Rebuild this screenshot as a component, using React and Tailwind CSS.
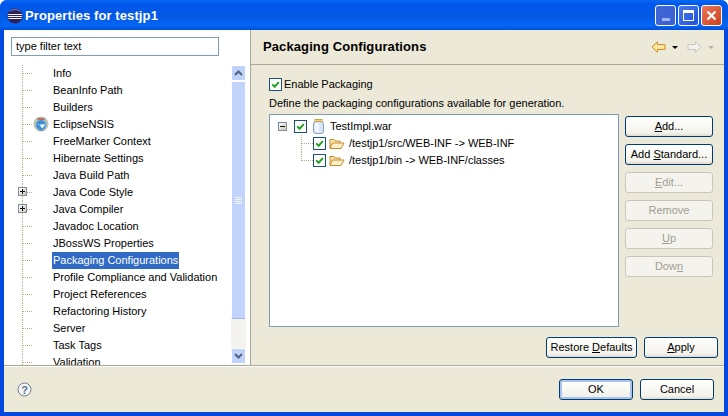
import React from 'react';

const font = "font-['Liberation_Sans','DejaVu_Sans',sans-serif]";

const prefs = [
  'Info', 'BeanInfo Path', 'Builders', 'EclipseNSIS', 'FreeMarker Context', 'Hibernate Settings',
  'Java Build Path', 'Java Code Style', 'Java Compiler', 'Javadoc Location', 'JBossWS Properties',
  'Packaging Configurations', 'Profile Compliance and Validation', 'Project References',
  'Refactoring History', 'Server', 'Task Tags', 'Validation',
];

const expandable = ['Java Code Style', 'Java Compiler'];

function PlusBox({ minus }) {
  return (
    <svg width="9" height="9" viewBox="0 0 9 9" className="block shrink-0">
      <defs>
        <linearGradient id="box" x1="0" y1="0" x2="1" y2="1">
          <stop offset="0" stopColor="#ffffff" />
          <stop offset="1" stopColor="#c9c5b0" />
        </linearGradient>
      </defs>
      <rect x="0.5" y="0.5" width="8" height="8" fill="url(#box)" stroke="#7b8ea6" />
      <path d="M2 4.5h5" stroke="#111" />
      {!minus && <path d="M4.5 2v5" stroke="#111" />}
    </svg>
  );
}

function Globe() {
  return (
    <svg width="16" height="16" viewBox="0 0 16 16" className="absolute left-[29px] top-0">
      <circle cx="8" cy="8" r="7.5" fill="#b9c4b8" />
      <circle cx="8" cy="9" r="5" fill="#3f8fd8" />
      <path d="M4 9c2-2 3 0 4 2s3 1 4-3" fill="#e8f2fa" />
      <path d="M4.5 3h7" stroke="#c9503a" strokeWidth="1.4" />
      <path d="M5 14.5h6" stroke="#7fa0a0" />
    </svg>
  );
}

function PrefRow({ name }) {
  const open = expandable.includes(name);
  const selected = name === 'Packaging Configurations';
  return (
    <div className="relative flex h-[17px] shrink-0 items-center pl-[48px]">
      {/* tree connector */}
      <svg width="14" height="17" className="absolute left-[18px] top-0">
        <path d="M0.5 0V17" stroke="#b8ad8c" strokeDasharray="1 1" />
        <path d="M1 8.5H11" stroke="#b8ad8c" strokeDasharray="1 1" />
      </svg>
      {open && (
        <div className="absolute left-[14px] top-[3px]">
          <PlusBox />
        </div>
      )}
      {name === 'EclipseNSIS' && <Globe />}
      <span className={`h-[17px] px-[1px] text-[11px] leading-[16px] whitespace-nowrap ${selected ? 'bg-[#316ac5] text-white' : 'text-black'}`}>
        {name}
      </span>
    </div>
  );
}

function Arrow({ up }) {
  return (
    <svg width="9" height="6" viewBox="0 0 9 6">
      <path d={up ? 'M1 5l3.5-3.5L8 5' : 'M1 1l3.5 3.5L8 1'} fill="none" stroke="#4d6185" strokeWidth="2" />
    </svg>
  );
}

function ScrollBar() {
  return (
    <div className="flex w-[15px] shrink-0 flex-col bg-[#f4f3ee]">
      <div className="flex h-[16px] items-center justify-center rounded-[2px] border border-white bg-[#c1d3fb]">
        <Arrow up />
      </div>
      <div className="flex flex-1 items-center justify-center rounded-[2px] border border-white border-b-[#9db6ee] bg-[#c3d4fc]">
        <div className="flex flex-col gap-[1px]">
          {[0, 1, 2, 3].map((i) => (
            <div key={i} className="h-[1px] w-[7px] bg-[#eef4fe]" />
          ))}
        </div>
      </div>
      <div className="mt-[29px] mb-[1px] flex h-[16px] items-center justify-center rounded-[2px] border border-white bg-[#c1d3fb]">
        <Arrow />
      </div>
    </div>
  );
}

function Check({ className = '' }) {
  return (
    <div className={`flex h-[13px] w-[13px] shrink-0 items-center justify-center border border-[#1c5180] bg-white ${className}`}>
      <svg width="9" height="9" viewBox="0 0 9 9">
        <path d="M1.2 4.4l2.4 2.4 4.2-4.6" fill="none" stroke="#21a121" strokeWidth="2" />
      </svg>
    </div>
  );
}

function Folder() {
  return (
    <svg width="16" height="13" viewBox="0 0 16 13" className="shrink-0">
      <path d="M1 11V2.5h4l1 1.5h5v2" fill="#fbe6b2" stroke="#c98a2b" />
      <path d="M1 11.5l2.5-5.5H15l-3 5.5z" fill="#fdf0c8" stroke="#c98a2b" />
    </svg>
  );
}

function Jar() {
  return (
    <svg width="11" height="15" viewBox="0 0 11 15" className="shrink-0">
      <rect x="0.5" y="2.5" width="10" height="12" rx="2.5" fill="#d9e6f6" stroke="#8ea3bd" />
      <rect x="2" y="4" width="4" height="9" rx="1.5" fill="#f4f8fd" />
      <rect x="2" y="0.5" width="7" height="2" fill="#f2d58a" stroke="#c6a24d" />
    </svg>
  );
}

function ChildRow({ path, last }) {
  return (
    <div className="relative flex h-[17px] items-center pl-[35px]">
      <svg width="12" height="17" className="absolute left-[23px] top-0">
        <path d={last ? 'M0.5 0V9' : 'M0.5 0V17'} stroke="#b8ad8c" strokeDasharray="1 1" />
        <path d="M1 8.5H12" stroke="#b8ad8c" strokeDasharray="1 1" />
      </svg>
      <Check />
      <div className="ml-[3px] flex"><Folder /></div>
      <span className="ml-[4px] whitespace-nowrap">{path}</span>
    </div>
  );
}

function Btn({ children, disabled, isDefault, className = '' }) {
  return (
    <button
      className={`flex h-[21px] items-center justify-center rounded-[3px] border text-[11px] leading-none ${
        disabled
          ? 'border-[#c9c7ba] bg-[#f4f3ee] text-[#a19f91]'
          : `border-[#003c74] text-black ${
              isDefault
                ? 'bg-[linear-gradient(#ffffff,#f0efe7)] shadow-[inset_0_0_0_2px_#a9c4ec]'
                : 'bg-[linear-gradient(#ffffff,#f3f2ea_85%,#dcd8ca)]'
            }`
      } ${className}`}
    >
      {children}
    </button>
  );
}

function WindowButton({ children, className = '' }) {
  return (
    <div className={`flex h-[21px] w-[21px] items-center justify-center rounded-[3px] border border-white ${className}`}>
      {children}
    </div>
  );
}

export default function App() {
  return (
    <div className={`flex h-[416px] w-[728px] flex-col overflow-hidden rounded-t-[7px] bg-[#0349e0] ${font}`}>
      {/* Title bar */}
      <div className="flex h-[30px] shrink-0 items-center bg-[linear-gradient(#0a6af0,#0058ee_12%,#0458e2_50%,#0466f5_85%,#0050d8)] pl-[7px] pr-[6px] pt-[2px]">
        <svg width="16" height="16" viewBox="0 0 16 16" className="shrink-0">
          <circle cx="8" cy="8" r="7.5" fill="#2c2255" />
          <path d="M1 6.5h14M1 8.5h14M1.5 10.5h13" stroke="#f3f1fb" />
          <path d="M3 3.5c2-2.5 8-2.5 10 0" fill="none" stroke="#8d86b8" />
        </svg>
        <span className="ml-[2px] flex-1 text-[13px] font-bold tracking-[0.1px] text-white">Properties for testjp1</span>
        <div className="-mt-[1px] flex gap-[2px]">
          <WindowButton className="border-[#9db6ee] bg-[linear-gradient(135deg,#3f66d8,#3a5fd0)]">
            <div className="mt-[8px] h-[3px] w-[8px] bg-[#9fb4ec]" />
          </WindowButton>
          <WindowButton className="bg-[linear-gradient(135deg,#4a78ea,#1f54dc)]">
            <div className="h-[11px] w-[11px] border border-t-[3px] border-white" />
          </WindowButton>
          <WindowButton className="bg-[linear-gradient(135deg,#e8775a,#cf3f1e)]">
            <svg width="11" height="11" viewBox="0 0 11 11">
              <path d="M1.5 1.5l8 8M9.5 1.5l-8 8" stroke="#fff" strokeWidth="2.2" />
            </svg>
          </WindowButton>
        </div>
      </div>

      {/* Client area */}
      <div className="mx-[4px] mb-[4px] flex min-h-0 flex-1 flex-col bg-[#ece9d8]">
        <div className="flex min-h-0 flex-1 border-b border-[#aca899]">
          {/* Left: filter + tree */}
          <div className="flex w-[246px] shrink-0 flex-col bg-white">
            <div className="h-[35px] shrink-0 pl-[7px] pt-[7px]">
              <div className="flex h-[19px] w-[208px] items-center border border-[#7f9db9] pl-[4px] text-[11px] text-black">
                type filter text
              </div>
            </div>
            <div className="flex min-h-0 flex-1 pr-[4px]">
              <div className="min-w-0 flex-1 overflow-hidden">
                {prefs.map((p) => (
                  <PrefRow key={p} name={p} />
                ))}
              </div>
              <ScrollBar />
            </div>
          </div>

          {/* Sash */}
          <div className="w-[1px] shrink-0 bg-[#aca899]" />

          {/* Right: page */}
          <div className="flex min-w-0 flex-1 flex-col">
            <div className="flex h-[35px] shrink-0 items-center justify-between border-b border-[#aca899] pl-[12px] pr-[10px]">
              <h1 className="text-[13px] font-bold tracking-[0.1px] text-black">Packaging Configurations</h1>
              <div className="flex items-center">
                <svg width="15" height="12" viewBox="0 0 15 12">
                  <path d="M6.5 0.8L1 6l5.5 5.2V8.5H14v-5H6.5z" fill="#fde7a6" stroke="#d98a1f" />
                </svg>
                <svg width="6" height="3" viewBox="0 0 6 3" className="ml-[6px]">
                  <path d="M0 0h6L3 3z" fill="#000" />
                </svg>
                <svg width="15" height="12" viewBox="0 0 15 12" className="ml-[9px]">
                  <path d="M8.5 0.8L14 6l-5.5 5.2V8.5H1v-5h7.5z" fill="#f2f1ec" stroke="#c9c8c2" />
                </svg>
                <svg width="6" height="3" viewBox="0 0 6 3" className="ml-[6px]">
                  <path d="M0 0h6L3 3z" fill="#b5b3a8" />
                </svg>
              </div>
            </div>

            <div className="flex min-h-0 flex-1 flex-col pl-[18px] pr-[6px] pt-[13px]">
              <label className="flex h-[13px] items-center gap-[2px] text-[11px] text-black">
                <Check />
                Enable Packaging
              </label>
              <p className="mt-[6px] h-[13px] text-[11px] leading-[13px] text-black">
                Define the packaging configurations available for generation.
              </p>
              <div className="mt-[4px] flex gap-[6px]">
                {/* Tree */}
                <div className="h-[213px] w-[350px] border border-[#7f9db9] bg-white pl-[8px] pt-[3px] text-[11px] text-black">
                  <div className="flex h-[17px] items-center">
                    <PlusBox minus />
                    <Check className="ml-[7px]" />
                    <div className="ml-[6px] flex"><Jar /></div>
                    <span className="ml-[6px]">TestImpl.war</span>
                  </div>
                  <ChildRow path="/testjp1/src/WEB-INF -> WEB-INF" />
                  <ChildRow path="/testjp1/bin -> WEB-INF/classes" last />
                </div>

                {/* Side buttons */}
                <div className="flex w-[88px] flex-col gap-[7px] pt-[2px]">
                  <Btn><span><u>A</u>dd...</span></Btn>
                  <Btn><span>Add <u>S</u>tandard...</span></Btn>
                  <Btn disabled><span><u>E</u>dit...</span></Btn>
                  <Btn disabled>Remove</Btn>
                  <Btn disabled><span><u>U</u>p</span></Btn>
                  <Btn disabled><span>Dow<u>n</u></span></Btn>
                </div>
              </div>
              <div className="mt-[10px] flex justify-end gap-[7px]">
                <Btn className="w-[91px]"><span>Restore <u>D</u>efaults</span></Btn>
                <Btn className="w-[74px]"><span><u>A</u>pply</span></Btn>
              </div>
            </div>
          </div>
        </div>

        {/* Footer */}
        <div className="flex h-[46px] shrink-0 items-center justify-between border-t border-white pl-[13px] pr-[10px]">
          <svg width="15" height="15" viewBox="0 0 15 15">
            <circle cx="7.5" cy="7.5" r="6.5" fill="#f4f6f8" stroke="#6d8299" />
            <text x="7.5" y="11.5" textAnchor="middle" fontSize="11" fontWeight="bold" fill="#5b7290">?</text>
          </svg>
          <div className="flex gap-[7px]">
            <Btn isDefault className="w-[74px]">OK</Btn>
            <Btn className="w-[74px]">Cancel</Btn>
          </div>
        </div>
      </div>
    </div>
  );
}
